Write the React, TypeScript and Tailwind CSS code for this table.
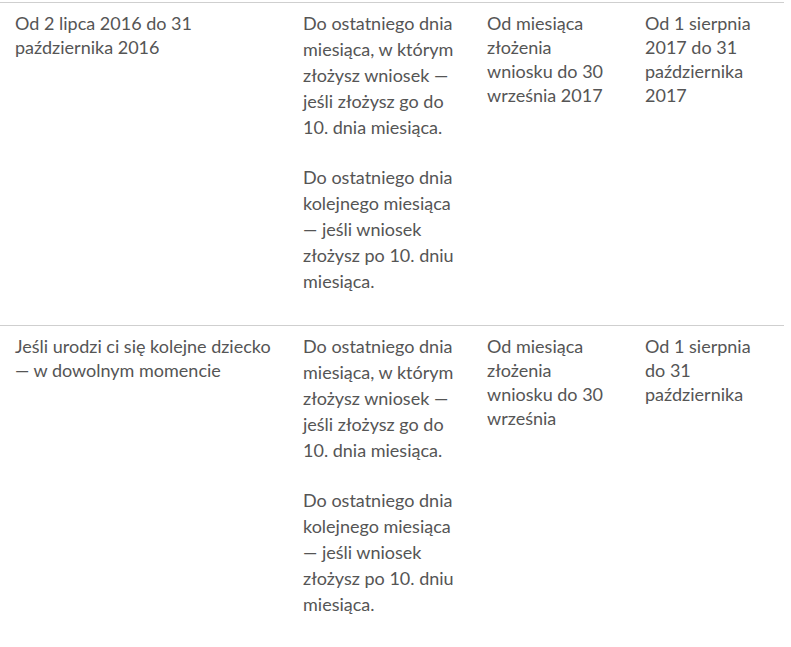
const rows = [
  {
    when: "Od 2 lipca 2016 do 31 października 2016",
    deadline: [
      "Do ostatniego dnia miesiąca, w którym złożysz wniosek — jeśli złożysz go do 10. dnia miesiąca.",
      "Do ostatniego dnia kolejnego miesiąca — jeśli wniosek złożysz po 10. dniu miesiąca.",
    ],
    from: "Od miesiąca złożenia wniosku do 30 września 2017",
    next: "Od 1 sierpnia 2017 do 31 października 2017",
  },
  {
    when: "Jeśli urodzi ci się kolejne dziecko — w dowolnym momencie",
    deadline: [
      "Do ostatniego dnia miesiąca, w którym złożysz wniosek — jeśli złożysz go do 10. dnia miesiąca.",
      "Do ostatniego dnia kolejnego miesiąca — jeśli wniosek złożysz po 10. dniu miesiąca.",
    ],
    from: "Od miesiąca złożenia wniosku do 30 września",
    next: "Od 1 sierpnia do 31 października",
  },
]

export default function App() {
  return (
    <div className="bg-white pt-[2px] font-['Lato',sans-serif] text-[18px] text-[#555]">
      <table className="w-[784px] table-fixed border-collapse">
        <colgroup>
          <col className="w-[288px]" />
          <col className="w-[184px]" />
          <col className="w-[158px]" />
          <col className="w-[154px]" />
        </colgroup>
        <tbody>
          {rows.map((r, i) => (
            <tr key={i} className="border-t border-[#cfcfcf] align-top">
              <td className="px-[15px] pt-[8px] pb-[7px] leading-[24px]">
                {r.when}
              </td>
              <td className="px-[15px] pt-[7px] pb-[7px] leading-[26px]">
                {r.deadline.map((d, j) => (
                  <p key={j} className="mb-[24px]">{d}</p>
                ))}
              </td>
              <td className="px-[15px] pt-[8px] pb-[7px] leading-[24px]">
                {r.from}
              </td>
              <td className="px-[15px] pt-[8px] pb-[7px] leading-[24px]">
                {r.next}
              </td>
            </tr>
          ))}
        </tbody>
      </table>
    </div>
  )
}
